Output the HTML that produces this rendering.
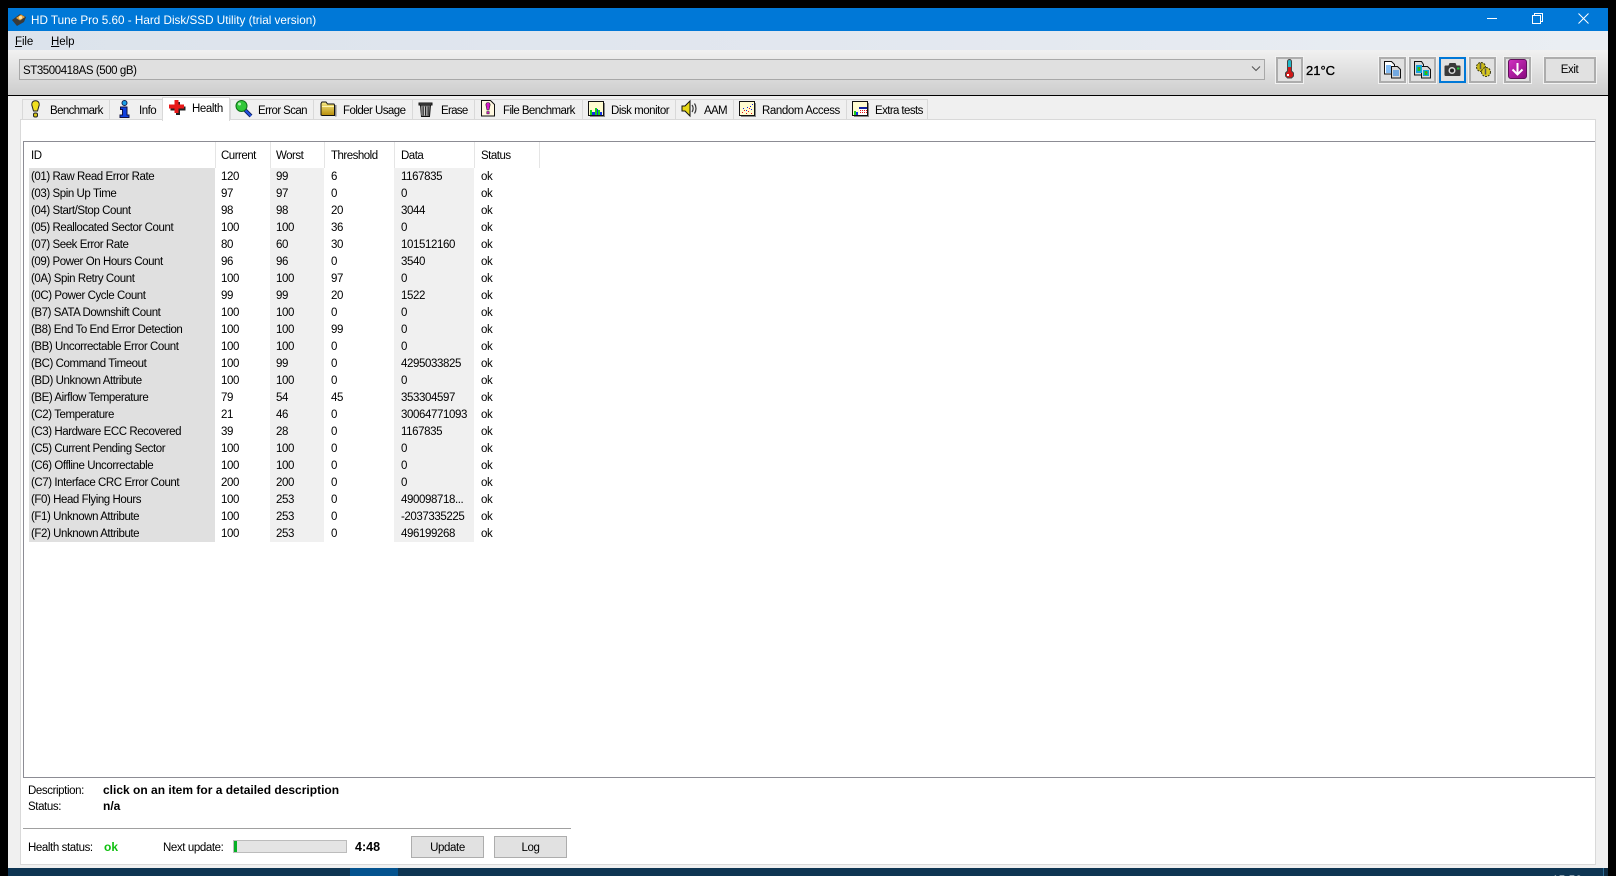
<!DOCTYPE html>
<html><head><meta charset="utf-8"><title>HD Tune Pro</title>
<style>
html,body{margin:0;padding:0;width:1616px;height:876px;overflow:hidden;background:#000;font-family:"Liberation Sans",sans-serif;font-size:11.5px;letter-spacing:-.4px;color:#000}
.a{position:absolute;white-space:nowrap}
.t{position:absolute;white-space:nowrap;line-height:16px;height:16px}
.l{letter-spacing:-.5px}
.b{font-weight:bold;font-size:12px;letter-spacing:0}
.box{position:absolute;box-sizing:border-box}
svg{position:absolute;display:block;overflow:visible}
.tb{position:absolute;box-sizing:border-box;top:57px;height:26px;background:#e1e1e1;border:2px solid #adadad;outline:1px solid #f2f2f2}
.tab{position:absolute;top:99px;height:21px;box-sizing:border-box;background:#f0f0f0;border:1px solid #d9d9d9;border-left:1px solid #d9d9d9}
.btn{position:absolute;box-sizing:border-box;top:836px;height:22px;width:73px;background:#e1e1e1;border:1px solid #adadad;text-align:center;line-height:22px}
table{position:absolute;left:29px;top:142px;border-collapse:collapse;table-layout:fixed;width:510px}
td,th{padding:2px 0 0 2px;height:17px;line-height:15px;font-weight:normal;text-align:left;white-space:nowrap;overflow:hidden;box-sizing:border-box;letter-spacing:-.43px}
th{height:26px;line-height:19px;border-right:1px solid #e5e5e5;padding-left:2px;vertical-align:top;padding-top:5px}
td+td,th+th{padding-left:6px;letter-spacing:-.4px}
th+th{padding-left:5.5px;letter-spacing:-.5px}
td:nth-child(n+4){padding-left:7px}
th:nth-child(n+4){padding-left:6.500px}
td:nth-child(1){background:#e0e0e0}
td:nth-child(3),td:nth-child(5){background:#f0f0f0}
</style></head><body>
<!-- window -->
<div class="box" style="left:8px;top:8px;width:1600px;height:860px;background:#f0f0f0"></div>
<!-- title bar -->
<div class="box" style="left:8px;top:8px;width:1600px;height:23px;background:#0078d7"></div>
<svg style="left:11px;top:12px" width="16" height="16" viewBox="0 0 16 16"><path d="M1 8 L9 2 L15 5 L13 10 L6 14 Z" fill="#3a3a3a"/><path d="M5 6 L10 2.5 L14 5 L9 8.5 Z" fill="#e8a33a"/><circle cx="9.5" cy="5.5" r="1.6" fill="#f7e4b0"/></svg>
<div class="t" style="left:31px;top:13px;color:#fff;font-size:11.7px;letter-spacing:0">HD Tune Pro 5.60 - Hard Disk/SSD Utility (trial version)</div>
<div class="box" style="left:1487px;top:18px;width:10px;height:1px;background:#fff"></div>
<svg style="left:1532px;top:13px" width="11" height="11" viewBox="0 0 11 11"><path d="M.5 2.5h8v8h-8zM2.5 2.5v-2h8v8h-2" fill="none" stroke="#fff"/></svg>
<svg style="left:1578px;top:13px" width="11" height="11" viewBox="0 0 11 11"><path d="M.5.5l10 10M10.5.5l-10 10" fill="none" stroke="#fff"/></svg>
<!-- menu -->
<div class="box" style="left:8px;top:31px;width:1600px;height:19px;background:linear-gradient(90deg,#dce3ec,#e2e7ef 50%,#eaeef3)"></div>
<div class="t" style="left:15px;top:34px;letter-spacing:-.1px"><u>F</u>ile</div>
<div class="t" style="left:51px;top:34px;letter-spacing:-.05px"><u>H</u>elp</div>
<!-- toolbar -->
<div class="box" style="left:8px;top:50px;width:1600px;height:45px;background:linear-gradient(#f1f1f1,#cdcdcd)"></div>
<div class="box" style="left:8px;top:95px;width:1600px;height:1px;background:#000"></div>
<div class="box" style="left:19px;top:59px;width:1246px;height:21px;background:#e0e0e0;border:1px solid #a8a8a8"></div>
<div class="t" style="left:23px;top:63px;letter-spacing:-.43px">ST3500418AS (500 gB)</div>
<svg style="left:1251px;top:66px" width="10" height="6" viewBox="0 0 10 6"><path d="M1 .5l4 4 4-4" fill="none" stroke="#555" stroke-width="1.1"/></svg>
<div class="tb" style="left:1276px;width:27px"></div>
<svg style="left:1284px;top:60px" width="11" height="20" viewBox="0 0 11 20"><path d="M3.500 1.500a2 2 0 0 1 4 0V11l2 2v3l-2 2h-4l-2-2v-3l2-2z" fill="#d01818" stroke="#444"/><path d="M4 1.500a1.500 1.500 0 0 1 3 0V7H4z" fill="#20b8c8"/><rect x="3" y="14" width="2" height="2" fill="#fff"/></svg>
<div class="t" style="left:1306px;top:63px;font-size:13px;letter-spacing:0;-webkit-text-stroke:.35px #000">21°C</div>
<div class="tb" style="left:1379px;width:27px"></div>
<svg style="left:1384px;top:61px" width="18" height="18" viewBox="0 0 18 18"><path d="M.5.5h7l3 3V13H.5z" fill="#fff" stroke="#111"/><path d="M7.5 5.5h6l3 3V17h-9z" fill="#d9d9d9" stroke="#111"/><path d="M2 5h5M2 7h5M2 9h5M2 11h5M9 10h6M9 12h6M9 14h6" stroke="#0a78e8"/></svg>
<div class="tb" style="left:1409px;width:27px"></div>
<svg style="left:1414px;top:61px" width="18" height="18" viewBox="0 0 18 18"><path d="M.5.5h7l2 3V14H.5z" fill="#d9d9d9" stroke="#111"/><path d="M7.5 5.5h6l3 3V17h-9z" fill="#d9d9d9" stroke="#111"/><rect x="2" y="4" width="6" height="8" fill="#18a0e0"/><rect x="3.5" y="6" width="3" height="4" fill="#18c818"/><rect x="9" y="9" width="6" height="6" fill="#18a0e0"/><rect x="10.5" y="10" width="3" height="4" fill="#18c818"/><rect x="5" y="7" width="1" height="1" fill="#f02020"/><rect x="12" y="11" width="1" height="1" fill="#f02020"/></svg>
<div class="box" style="left:1439px;top:57px;width:27px;height:26px;background:#e1e1e1;border:2px solid #0078d7"></div>
<svg style="left:1444px;top:62px" width="17" height="15" viewBox="0 0 17 15"><path d="M1.5 3.5h3l1-2.500h6l1 2.500h3a1 1 0 0 1 1 1V13a1 1 0 0 1-1 1h-14a1 1 0 0 1-1-1V4.500a1 1 0 0 1 1-1z" fill="#3a3a3a"/><circle cx="8" cy="8.500" r="3.500" fill="#d8d8d8"/><circle cx="8" cy="8.500" r="2" fill="#222"/><rect x="13" y="5.500" width="2.500" height="2" fill="#18c838"/></svg>
<div class="tb" style="left:1469px;width:27px"></div>
<svg style="left:1475px;top:61px" width="16" height="17" viewBox="0 0 16 17"><circle cx="6" cy="6" r="4.500" fill="#c8b818" stroke="#3a3a10" stroke-dasharray="2 1"/><circle cx="11" cy="11" r="4.500" fill="#d8c820" stroke="#3a3a10" stroke-dasharray="2 1"/><path d="M5.500 2v6M10.500 7.500v6" stroke="#555" stroke-width="1.500"/></svg>
<div class="tb" style="left:1504px;width:27px"></div>
<div class="box" style="left:1508px;top:59px;width:19px;height:20px;border-radius:3px;background:linear-gradient(135deg,#d030c0,#8a0a80);border:1px solid #60105a"></div>
<svg style="left:1510px;top:62px" width="15" height="15" viewBox="0 0 15 15"><path d="M7.500 1v11M2.500 7.500l5 5 5-5" fill="none" stroke="#fff" stroke-width="2"/></svg>
<div class="box" style="left:1544px;top:57px;width:52px;height:26px;background:#e1e1e1;border:2px solid #adadad;outline:1px solid #f2f2f2;text-align:center;line-height:23px;padding-right:1px">Exit</div>
<!-- tab strip -->
<div class="box" style="left:20px;top:119px;width:1576px;height:746px;background:#fff;border:1px solid #d9d9d9"></div>
<div class="tab" style="left:22px;width:88px"></div>
<div class="tab" style="left:109px;width:54px"></div>
<div class="tab" style="left:230px;width:84px"></div>
<div class="tab" style="left:313px;width:100px"></div>
<div class="tab" style="left:412px;width:63px"></div>
<div class="tab" style="left:474px;width:109px"></div>
<div class="tab" style="left:582px;width:94px"></div>
<div class="tab" style="left:675px;width:59px"></div>
<div class="tab" style="left:733px;width:114px"></div>
<div class="tab" style="left:846px;width:82px"></div>
<div class="box" style="left:162px;top:97px;width:68px;height:24px;background:#fff;border:1px solid #d9d9d9;border-bottom:none"></div>
<!-- tab icons -->
<svg style="left:30px;top:100px" width="11" height="18" viewBox="0 0 11 18"><path d="M5.500.8c2.800 0 4 2 3.700 4.200L7.500 11h-4L1.800 5C1.500 2.800 2.700.8 5.500.8z" fill="#f0e020" stroke="#222"/><rect x="3.500" y="13" width="4" height="4" rx="1.500" fill="#d8c818" stroke="#222"/></svg>
<svg style="left:119px;top:100px" width="11" height="18" viewBox="0 0 11 18"><circle cx="5.500" cy="3" r="2.500" fill="#18a0e8" stroke="#102050"/><path d="M1.500 7h6.500v8h2v2.500H1V15h2.500V9.500h-2z" fill="#1040e0" stroke="#101040"/></svg>
<svg style="left:168px;top:99px" width="18" height="17" viewBox="0 0 18 17"><path d="M7 2h4v4.500h5.500v4H11V15H7v-4.500H1.500v-4H7z" fill="#222" transform="translate(1 1)"/><path d="M6.500 1h4v4.500H16v4h-5.500V14h-4V9.500H1v-4h5.500z" fill="#e81818"/></svg>
<svg style="left:235px;top:100px" width="18" height="17" viewBox="0 0 18 17"><path d="M10 10l6 6" stroke="#102060" stroke-width="4"/><path d="M10 10l6 6" stroke="#2050e0" stroke-width="2"/><circle cx="6.500" cy="6" r="5.500" fill="#30c838" stroke="#107018"/><circle cx="4.500" cy="4" r="1.500" fill="#b0f0b0"/></svg>
<svg style="left:320px;top:101px" width="17" height="16" viewBox="0 0 17 16"><defs><linearGradient id="fg" x1="0" y1="0" x2="0" y2="1"><stop offset="0" stop-color="#f8ec88"/><stop offset="1" stop-color="#b88c08"/></linearGradient></defs><path d="M1 2.500 2 1h4l1.500 2H14l.5 1v10.500H2L1 14z" fill="url(#fg)" stroke="#111"/><path d="M2 5.500h12" stroke="#fff6b0"/><rect x="15" y="4" width="1.500" height="11.500" fill="#888"/></svg>
<svg style="left:418px;top:101px" width="16" height="16" viewBox="0 0 16 16"><path d="M1 2h13v2H1z" fill="#555" stroke="#111"/><path d="M2.500 4h10l-1 11.500h-8z" fill="#777" stroke="#111"/><path d="M5 5.500v9M7.500 5.500v9M10 5.500v9" stroke="#222"/><path d="M4 5.500v9M6.500 5.500v9M9 5.500v9" stroke="#ccc"/></svg>
<svg style="left:480px;top:100px" width="16" height="17" viewBox="0 0 16 17"><path d="M1.500.5h9l4 4V16h-13z" fill="#fff8e0" stroke="#111"/><path d="M8 2.500c1.800 0 2.300 1.300 2 3L9 10H7L6 5.500c-.3-1.700.2-3 2-3z" fill="#d818c8" stroke="#222" stroke-width=".6"/><rect x="6.800" y="11.500" width="2.400" height="2.400" fill="#d818c8" stroke="#222" stroke-width=".5"/></svg>
<svg style="left:588px;top:101px" width="17" height="16" viewBox="0 0 17 16"><rect x="2" y="2" width="15" height="14" fill="#888"/><rect x=".5" y=".5" width="15" height="14" fill="#fffbd0" stroke="#111"/><path d="M2 9h2v5H2zM7 7h2v7H7zM10 9h2v5h-2z" fill="#18d018"/><path d="M4 11h3v3H4zM9 8h1v6H9zM12 11h2v3h-2z" fill="#1030e8"/></svg>
<svg style="left:681px;top:100px" width="17" height="17" viewBox="0 0 17 17"><path d="M1 6h3l5-5v15l-5-5H1z" fill="#e8d818" stroke="#111"/><path d="M11 5c1.500 2 1.500 5 0 7M13.500 3.500c2 3 2 7 0 10" fill="none" stroke="#333" stroke-width="1.200"/></svg>
<svg style="left:739px;top:101px" width="17" height="16" viewBox="0 0 17 16"><rect x="2" y="2" width="15" height="14" fill="#888"/><rect x=".5" y=".5" width="15" height="14" fill="#fffbd0" stroke="#111"/><path d="M3 11h1v1H3zM5 9h1v1H5zM7 12h1v1H7zM9 10h1v1H9zM12 12h1v1h-1zM10 7h1v1h-1z" fill="#e81818"/><path d="M4 7h1v1H4zM7 9h1v1H7zM8 6h1v1H8zM11 5h1v1h-1zM13 3h1v1h-1zM12 8h1v1h-1z" fill="#1020e0"/></svg>
<svg style="left:852px;top:101px" width="17" height="16" viewBox="0 0 17 16"><rect x="2" y="2" width="15" height="14" fill="#888"/><rect x=".5" y=".5" width="15" height="14" fill="#fffbd0" stroke="#111"/><path d="M2 10h2v4H2z" fill="#18d018"/><path d="M4 11h2v3H4z" fill="#1030e8"/><rect x="7" y="6" width="8" height="2" fill="#1020a0"/><rect x="7" y="8" width="8" height="6" fill="#fff"/><path d="M8 9h1v1H8zM10 9h1v1h-1zM12 9h1v1h-1zM8 11h1v1H8zM10 11h1v1h-1zM12 11h1v1h-1zM14 9h1v1h-1zM14 11h1v1h-1z" fill="#e81818"/></svg>
<!-- tab labels -->
<div class="t l" style="left:50px;top:103px;letter-spacing:-.6px">Benchmark</div>
<div class="t l" style="left:139px;top:103px">Info</div>
<div class="t l" style="left:192px;top:101px;letter-spacing:-.4px">Health</div>
<div class="t l" style="left:258px;top:103px;letter-spacing:-.6px">Error Scan</div>
<div class="t l" style="left:343px;top:103px;letter-spacing:-.55px">Folder Usage</div>
<div class="t l" style="left:441px;top:103px;letter-spacing:-.7px">Erase</div>
<div class="t l" style="left:503px;top:103px;letter-spacing:-.58px">File Benchmark</div>
<div class="t l" style="left:611px;top:103px;letter-spacing:-.48px">Disk monitor</div>
<div class="t l" style="left:704px;top:103px;letter-spacing:-.7px">AAM</div>
<div class="t l" style="left:762px;top:103px;letter-spacing:-.4px">Random Access</div>
<div class="t l" style="left:875px;top:103px;letter-spacing:-.6px">Extra tests</div>
<!-- list -->
<div class="box" style="left:23px;top:141px;width:1572px;height:637px;background:#fff;border:1px solid #8c8c94;border-right:none"></div>
<table>
<colgroup><col style="width:186px"><col style="width:55px"><col style="width:54px"><col style="width:70px"><col style="width:80px"><col style="width:65px"></colgroup>
<tr><th>ID</th><th>Current</th><th>Worst</th><th>Threshold</th><th>Data</th><th>Status</th></tr>
<tr><td>(01) Raw Read Error Rate</td><td>120</td><td>99</td><td>6</td><td>1167835</td><td>ok</td></tr>
<tr><td>(03) Spin Up Time</td><td>97</td><td>97</td><td>0</td><td>0</td><td>ok</td></tr>
<tr><td>(04) Start/Stop Count</td><td>98</td><td>98</td><td>20</td><td>3044</td><td>ok</td></tr>
<tr><td>(05) Reallocated Sector Count</td><td>100</td><td>100</td><td>36</td><td>0</td><td>ok</td></tr>
<tr><td>(07) Seek Error Rate</td><td>80</td><td>60</td><td>30</td><td>101512160</td><td>ok</td></tr>
<tr><td>(09) Power On Hours Count</td><td>96</td><td>96</td><td>0</td><td>3540</td><td>ok</td></tr>
<tr><td>(0A) Spin Retry Count</td><td>100</td><td>100</td><td>97</td><td>0</td><td>ok</td></tr>
<tr><td>(0C) Power Cycle Count</td><td>99</td><td>99</td><td>20</td><td>1522</td><td>ok</td></tr>
<tr><td>(B7) SATA Downshift Count</td><td>100</td><td>100</td><td>0</td><td>0</td><td>ok</td></tr>
<tr><td>(B8) End To End Error Detection</td><td>100</td><td>100</td><td>99</td><td>0</td><td>ok</td></tr>
<tr><td>(BB) Uncorrectable Error Count</td><td>100</td><td>100</td><td>0</td><td>0</td><td>ok</td></tr>
<tr><td>(BC) Command Timeout</td><td>100</td><td>99</td><td>0</td><td>4295033825</td><td>ok</td></tr>
<tr><td>(BD) Unknown Attribute</td><td>100</td><td>100</td><td>0</td><td>0</td><td>ok</td></tr>
<tr><td>(BE) Airflow Temperature</td><td>79</td><td>54</td><td>45</td><td>353304597</td><td>ok</td></tr>
<tr><td>(C2) Temperature</td><td>21</td><td>46</td><td>0</td><td>30064771093</td><td>ok</td></tr>
<tr><td>(C3) Hardware ECC Recovered</td><td>39</td><td>28</td><td>0</td><td>1167835</td><td>ok</td></tr>
<tr><td>(C5) Current Pending Sector</td><td>100</td><td>100</td><td>0</td><td>0</td><td>ok</td></tr>
<tr><td>(C6) Offline Uncorrectable</td><td>100</td><td>100</td><td>0</td><td>0</td><td>ok</td></tr>
<tr><td>(C7) Interface CRC Error Count</td><td>200</td><td>200</td><td>0</td><td>0</td><td>ok</td></tr>
<tr><td>(F0) Head Flying Hours</td><td>100</td><td>253</td><td>0</td><td>490098718...</td><td>ok</td></tr>
<tr><td>(F1) Unknown Attribute</td><td>100</td><td>253</td><td>0</td><td>-2037335225</td><td>ok</td></tr>
<tr><td>(F2) Unknown Attribute</td><td>100</td><td>253</td><td>0</td><td>496199268</td><td>ok</td></tr>
</table>
<!-- bottom -->
<div class="t" style="left:28px;top:783px">Description:</div>
<div class="t b" style="left:103px;top:782px">click on an item for a detailed description</div>
<div class="t" style="left:28px;top:799px">Status:</div>
<div class="t b" style="left:103px;top:798px">n/a</div>
<div class="box" style="left:23px;top:828px;width:548px;height:1px;background:#a0a0a0"></div>
<div class="t" style="left:28px;top:840px">Health status:</div>
<div class="t b" style="left:104px;top:839px;color:#10c010">ok</div>
<div class="t" style="left:163px;top:840px">Next update:</div>
<div class="box" style="left:233px;top:840px;width:114px;height:13px;background:#e4e4e4;border:1px solid #bcbcbc"></div>
<div class="box" style="left:234px;top:841px;width:3px;height:11px;background:#06b025"></div>
<div class="t b" style="left:355px;top:839px;font-size:12.5px">4:48</div>
<div class="btn" style="left:411px">Update</div>
<div class="btn" style="left:494px">Log</div>
<!-- taskbar -->
<div class="box" style="left:8px;top:868px;width:1595px;height:8px;background:#0e3553"></div>
<div class="box" style="left:350px;top:868px;width:48px;height:8px;background:#04538f"></div>
<div class="box" style="left:1603px;top:868px;width:1px;height:8px;background:#2a6a94"></div>
<div class="box" style="left:1604px;top:868px;width:4px;height:8px;background:#0e2a40"></div>
<div class="a" style="left:1552px;top:868px;width:30px;height:8px;overflow:hidden;color:#fff"><div style="position:absolute;top:5px;left:0;line-height:14px;font-size:12px;letter-spacing:0">15:50</div></div>
</body></html>
